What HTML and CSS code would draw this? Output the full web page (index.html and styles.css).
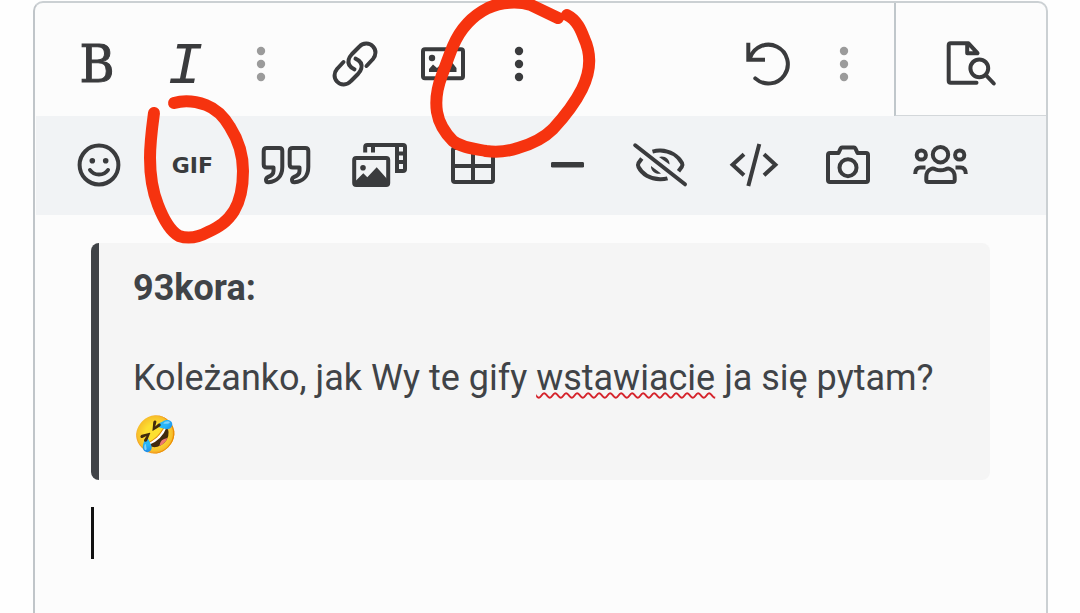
FILE: index.html
```html
<!DOCTYPE html>
<html lang="pl">
<head>
<meta charset="utf-8">
<meta name="viewport" content="width=device-width, initial-scale=1">
<title>Edytor</title>
<link rel="stylesheet" href="styles.css">
</head>
<body>
<main class="editor">
  <div class="toolbar" role="toolbar" aria-label="Formatowanie">
    <div class="group">
      <button class="tool letter bold" type="button" aria-label="Pogrubienie">B</button>
      <button class="tool letter italic" type="button" aria-label="Kursywa">I</button>
      <button class="tool more muted" type="button" aria-label="Więcej opcji tekstu">
        <svg class="icon" viewBox="0 0 60 60"><g class="solid"><circle cx="30" cy="17" r="4.2"/><circle cx="30" cy="30" r="4.2"/><circle cx="30" cy="43" r="4.2"/></g></svg>
      </button>
    </div>
    <div class="group">
      <button class="tool" type="button" aria-label="Link">
        <svg class="icon" viewBox="0 0 60 60"><path id="chain" d="M29.5 35.3Q22 32 23.7 25.5Q24.3 23 27 20L34 13C38 8.5 44.5 8.5 48 12.5C51.5 16 51 21.5 48 25L41.5 32"/><use href="#chain" transform="rotate(180 30 30)"/></svg>
      </button>
      <button class="tool" type="button" aria-label="Obraz">
        <svg class="icon" viewBox="0 0 60 60"><rect x="10" y="15.3" width="40" height="29" rx="2"/><g class="solid"><circle cx="19" cy="24" r="3.2"/><path d="M16 38V35L20 30.5L24 34L33 26Q36 25 38 27L43.5 34V38Z"/></g></svg>
      </button>
      <button class="tool more" type="button" aria-label="Więcej wstawek">
        <svg class="icon" viewBox="0 0 60 60"><g class="solid"><circle cx="30" cy="17" r="4.2"/><circle cx="30" cy="30" r="4.2"/><circle cx="30" cy="43" r="4.2"/></g></svg>
      </button>
    </div>
    <div class="group history">
      <button class="tool" type="button" aria-label="Cofnij">
        <svg class="icon" viewBox="0 0 60 60"><path d="M12 24A19.4 19.4 0 1 1 17.3 44.4"/><path class="mitre" d="M10.3 8.7V25.7H27"/></svg>
      </button>
      <button class="tool more muted" type="button" aria-label="Więcej">
        <svg class="icon" viewBox="0 0 60 60"><g class="solid"><circle cx="30" cy="17" r="4.2"/><circle cx="30" cy="30" r="4.2"/><circle cx="30" cy="43" r="4.2"/></g></svg>
      </button>
    </div>
    <button class="preview" type="button" aria-label="Podgląd">
      <svg class="icon" viewBox="0 0 60 60"><path d="M35.5 49.7H9.7Q7.7 49.7 7.7 47.7V12.3Q7.7 10.3 9.7 10.3H27.5L36.5 20.2H26.2V11"/><circle cx="38.3" cy="35.3" r="8.9"/><path d="M44.8 42L52.8 50.5"/></svg>
    </button>
  </div>

  <div class="toolbar extra" role="toolbar" aria-label="Wstawianie">
    <button class="tool" type="button" aria-label="Emotikony">
      <svg class="icon" viewBox="0 0 60 60"><circle cx="30" cy="30" r="19.4"/><path d="M21 35Q24 39.5 30 39.5T39 35"/><g class="solid"><circle cx="23.3" cy="25.8" r="2.8"/><circle cx="36.7" cy="25.8" r="2.8"/></g></svg>
    </button>
    <button class="tool gif" type="button">GIF</button>
    <button class="tool" type="button" aria-label="Cytat">
      <svg class="icon" viewBox="0 0 60 60"><path id="mark" d="M10.7 13H23.3Q26.3 13 26.3 16V32C26.3 41 21 46.5 12.5 47.3Q10 47.3 10 44.8Q10 43 12 42Q17.5 40 17.5 36V32.5H10.7Q7.7 32.5 7.7 29.5V16Q7.7 13 10.7 13Z"/><use href="#mark" x="26"/></svg>
    </button>
    <button class="tool" type="button" aria-label="Multimedia">
      <svg class="icon" viewBox="0 0 60 60"><rect x="4.2" y="23" width="34" height="27" rx="2"/><path class="butt" d="M15.2 17.5V12Q15.2 10 17.2 10H53Q55 10 55 12V34Q55 36 53 36H45M23 10V17.5M47 10V36M47 18.5H55M47 27H55"/><g class="solid"><circle cx="13" cy="32.7" r="2.8"/><path d="M5 50V46.5L13.3 38.3L17.3 42.3L26.7 32.3L38 45V50Z"/></g></svg>
    </button>
    <button class="tool" type="button" aria-label="Tabela">
      <svg class="icon" viewBox="0 0 60 60"><rect x="10" y="13" width="40" height="34" rx="2"/><path d="M30 13V47M10 31H50"/></svg>
    </button>
    <button class="tool" type="button" aria-label="Linia pozioma">
      <svg class="icon" viewBox="0 0 60 60"><rect class="solid" x="14" y="27" width="33" height="5.6" rx="1.4"/></svg>
    </button>
    <button class="tool" type="button" aria-label="Spoiler">
      <svg class="icon" viewBox="0 0 60 60"><path class="butt" d="M22.5 16.6Q27 15.4 30.5 15.6C40 16 48 21 52 28Q53 30 51.8 31.8L48.5 36.3M11.8 23.5L8.5 28Q7.5 30 8.5 32C12 39 20 44 30 44.3Q34 44.4 37.5 43.4"/><path d="M5.2 10.3L55 49.3"/><g class="solid"><path d="M29 22C34 20 40 24 39.5 29.5Z"/><path d="M21 31C20.5 36 26 40 31 38.5Z"/></g></svg>
    </button>
    <button class="tool" type="button" aria-label="Kod">
      <svg class="icon" viewBox="0 0 60 60"><path class="mitre" d="M20 19.3L8.6 29.8L20 40.3M40 19.3L51.4 29.8L40 40.3M35.3 9L24.3 51"/></svg>
    </button>
    <button class="tool" type="button" aria-label="Aparat">
      <svg class="icon" viewBox="0 0 60 60"><path d="M12 18H20.5L22.5 13.6Q23 12.6 24 12.6H36Q37 12.6 37.5 13.6L39.5 18H48Q50 18 50 20V45Q50 47 48 47H12Q10 47 10 45V20Q10 18 12 18Z"/><circle cx="30" cy="32.7" r="8.5"/></svg>
    </button>
    <button class="tool" type="button" aria-label="Użytkownicy">
      <svg class="icon" viewBox="0 0 60 60"><circle cx="29.5" cy="19.7" r="7.7"/><circle cx="10.3" cy="20" r="4.6"/><circle cx="48.7" cy="20" r="4.6"/><path d="M20 34Q22 33 24.5 34.3Q29.5 36.3 34.5 34.3Q37 33 39 34Q43.7 36 43.7 42V45Q43.7 47 41.7 47H17.3Q15.3 47 15.3 45V42Q15.3 36 20 34Z"/><path class="butt" d="M4.2 39Q4.2 32.5 9.5 32.5H14.5M54.8 39Q54.8 32.5 49.5 32.5H44.5"/></svg>
    </button>
  </div>

  <div class="content" role="textbox" aria-multiline="true" aria-label="Treść posta">
    <blockquote class="quote">
      <p class="author">93kora:</p>
      <p>Koleżanko, jak Wy te gify <span class="misspelled">wstawiacie</span> ja się pytam? 🤣</p>
    </blockquote>
    <p class="line"><span class="caret"></span></p>
  </div>

  <svg class="markup" width="620" height="260" viewBox="0 0 620 260" aria-hidden="true">
    <path d="M558 18L531 5C518 1 501 2 488 8C470 17 459 32 453 46C448 58 446 65 442 75C437 88 435 99 437 112C439 124 446 134 453 141C462 148 476 149 486 151C500 153 509 151 518 148C532 144 544 138 553 129C565 116 575 103 582 89C591 71 591 53 584 38C581 30 577 20 567 15"/>
    <path d="M154 113C152 128 150 142 150 158C150 174 152 190 158 205C163 218 170 231 179 236C188 239 199 237 208 232C219 227 227 222 234 211C240 201 243 185 243 171C243 152 237 138 230 127C223 115 214 108 206 105C195 101 184 100 174 103"/>
  </svg>
</main>
</body>
</html>
```
FILE: styles.css
```css
* {
  box-sizing: border-box;
}

body {
  margin: 0;
  background: #fefefe;
  color: #404347;
  font-family: Roboto, "Noto Sans", sans-serif;
}

.editor {
  display: flex;
  flex-direction: column;
  min-height: calc(100vh - 1px);
  margin: 1px 32px 0 33px;
  border: 2px solid #cbd0d3;
  border-left-color: #c0c5c9;
  border-bottom: 0;
  border-radius: 10px 10px 0 0;
  background: #fcfcfc;
}

.toolbar {
  display: flex;
  padding-left: 18px;
  color: #3a3b3d;
}

.group {
  display: flex;
  align-items: center;
  margin-right: 18px;
}

.history {
  margin-left: auto;
}

.tool,
.preview {
  display: flex;
  align-items: center;
  justify-content: center;
  padding: 0;
  border: 0;
  background: none;
  color: inherit;
}

.tool {
  width: 88px;
  height: 99px;
}

.group .tool {
  height: 114px;
  padding-top: 8px;
}

.group .more {
  width: 64px;
}

.muted {
  color: #9b9b9b;
}

.letter {
  line-height: 60px;
}

.bold {
  font-family: "DejaVu Serif Condensed", "DejaVu Serif", serif;
  font-size: 53px;
  -webkit-text-stroke: 1px currentColor;
}

.group .italic {
  padding-top: 14px;
  font-family: "Liberation Mono", monospace;
  font-size: 60px;
  font-style: italic;
}

.preview {
  width: 152px;
  height: 114px;
  padding-top: 8px;
  border-left: 2px solid #c0c7cb;
  border-bottom: 2px solid #d3d7da;
}

.extra {
  margin: -1px 0 0 1px;
  padding: 0 58px 0 16px;
  background: #f1f3f5;
}

.extra .tool {
  flex: 1;
  padding-bottom: 2px;
}

.extra .gif {
  padding-bottom: 0;
  font: bold 22px/30px "DejaVu Sans", sans-serif;
}

.icon {
  width: 60px;
  height: 60px;
  flex: none;
  fill: none;
  stroke: currentColor;
  stroke-width: 4;
  stroke-linecap: round;
  stroke-linejoin: round;
}

.icon .solid {
  fill: currentColor;
  stroke: none;
}

.icon .butt {
  stroke-linecap: butt;
}

.icon .mitre {
  stroke-linecap: butt;
  stroke-linejoin: miter;
}

.content {
  flex: 1;
  padding: 28px 56px 24px;
  font-size: 36px;
  line-height: 57px;
}

.quote {
  margin: 0;
  padding: 17px 34px 16px;
  border-left: 8px solid #404347;
  border-radius: 8px;
  background: #f5f5f5;
}

.quote p {
  margin: 0;
}

.quote .author {
  margin-bottom: 33px;
  font-weight: bold;
}

.misspelled {
  text-decoration: underline wavy #d5232b 2px;
  text-decoration-skip-ink: none;
  text-underline-offset: 2px;
}

.line {
  display: flex;
  margin: 27px 0 0;
}

.caret {
  width: 3px;
  height: 52px;
  background: #111;
}

.markup {
  position: absolute;
  top: 0;
  left: 0;
  fill: none;
  stroke: #f6330f;
  stroke-width: 12;
  stroke-linecap: round;
  stroke-linejoin: round;
  pointer-events: none;
}
```
